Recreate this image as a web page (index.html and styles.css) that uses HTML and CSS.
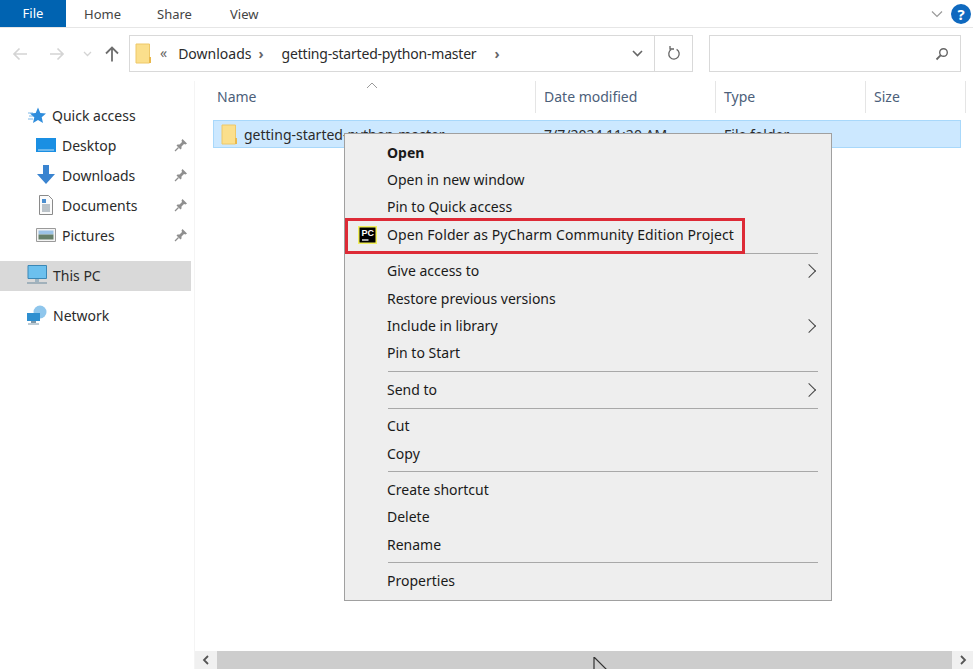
FILE: index.html
```html
<!DOCTYPE html>
<html lang="en">

<head>
  <meta charset="UTF-8" />
  <title>getting-started-python-master</title>
  <link rel="stylesheet" href="styles.css">
</head>

<body>

  <div class="ribbon">
    <span class="tab tab-file">File</span>
    <span class="tab">Home</span>
    <span class="tab">Share</span>
    <span class="tab">View</span>
    <svg class="ribbon-chevron" width="12" height="8" viewBox="0 0 12 8"><path d="M1 1.500 6 6.500 11 1.500" fill="none" stroke="#9a9a9a" stroke-width="1.200"/></svg>
    <span class="help">?</span>
  </div>

  <div class="addressbar">
    <div class="nav">
      <svg class="nav-back" width="16" height="14" viewBox="0 0 16 14"><path d="M15 7H2M7.500 1.500 2 7l5.500 5.500" fill="none" stroke="#d4d4d4" stroke-width="1.700"/></svg>
      <svg class="nav-forward" width="16" height="14" viewBox="0 0 16 14"><path d="M1 7h13M8.500 1.500 14 7l-5.500 5.500" fill="none" stroke="#d4d4d4" stroke-width="1.700"/></svg>
      <svg class="nav-recent" width="9" height="6" viewBox="0 0 9 6"><path d="M1 1 4.500 4.500 8 1" fill="none" stroke="#d4d4d4" stroke-width="1.300"/></svg>
      <svg class="nav-up" width="14" height="16" viewBox="0 0 14 16"><path d="M7 15.500V2M1 7.500 7 1.500l6 6" fill="none" stroke="#6e6e6e" stroke-width="1.800"/></svg>
    </div>
    <div class="address">
      <svg class="folder" width="16" height="21" viewBox="0 0 16 21"><path d="M1 1h13.500v19H1z" fill="#fbdf8c" stroke="#eec869"/><path d="M14 14h2v6h-2z" fill="#e9b84c"/></svg>
      <span class="crumb-more">«</span>
      <span>Downloads</span>
      <span class="crumb-sep">›</span>
      <span class="crumb-last">getting-started-python-master</span>
      <span class="crumb-sep">›</span>
      <svg class="address-drop" width="11" height="7" viewBox="0 0 11 7"><path d="M1 1 5.500 5.500 10 1" fill="none" stroke="#666" stroke-width="1.600"/></svg>
      <div class="refresh">
        <svg width="14" height="15" viewBox="0 0 14 15"><path d="M9.600 3.400A5.200 5.200 0 1 1 4.200 3.500" fill="none" stroke="#666" stroke-width="1.300"/><path d="M5 1v4H1" fill="none" stroke="#666" stroke-width="1.300" transform="rotate(90 5 3)"/></svg>
      </div>
    </div>
    <div class="search">
      <svg width="14" height="14" viewBox="0 0 14 14"><circle cx="8.500" cy="5.500" r="3.800" fill="none" stroke="#666" stroke-width="1.400"/><path d="M5.800 8.200 1.500 12.500" stroke="#666" stroke-width="1.800"/></svg>
    </div>
  </div>

  <div class="main">
    <nav class="sidebar">
      <div class="nav-item nav-quick">
        <svg width="24" height="18" viewBox="0 0 24 18"><path d="M4 7h5M5 10h5M4 13h5" stroke="#7cb8e8"/><path d="M14 1.500 16.300 7 22 7.500 17.700 11.300 19 17 14 14 9 17 10.300 11.300 6 7.500 11.700 7z" fill="#2f8ddc"/></svg>
        Quick access
      </div>
      <div class="nav-item nav-child">
        <svg width="20" height="16" viewBox="0 0 20 16"><path d="M0 1h20v14H0z" fill="#1a8fe3"/><path d="M2 13h16" stroke="#bfe0f7"/></svg>
        Desktop
        <svg class="pin" width="14" height="14" viewBox="0 0 14 14"><path d="M8.500 1 13 5.500 11.500 6.500 10 6 7.500 8.500 7.500 10.500 6.500 11.500 2.500 7.500 3.500 6.500 5.500 6.500 8 4 7.500 2.500z" fill="#8f8f8f"/><path d="M4.500 9.500 1 13" stroke="#8f8f8f" stroke-width="1.200"/></svg>
      </div>
      <div class="nav-item nav-child">
        <svg width="20" height="20" viewBox="0 0 20 20"><path d="M7 0h6v9h6l-9 10L1 9h6z" fill="#3a84d0"/></svg>
        Downloads
        <svg class="pin" width="14" height="14" viewBox="0 0 14 14"><path d="M8.500 1 13 5.500 11.500 6.500 10 6 7.500 8.500 7.500 10.500 6.500 11.500 2.500 7.500 3.500 6.500 5.500 6.500 8 4 7.500 2.500z" fill="#8f8f8f"/><path d="M4.500 9.500 1 13" stroke="#8f8f8f" stroke-width="1.200"/></svg>
      </div>
      <div class="nav-item nav-child">
        <svg width="20" height="20" viewBox="0 0 20 20"><path d="M3.500.5h9l4 4v15h-13z" fill="#fbfbfb" stroke="#8a8a8a"/><path d="M6 4h4v4H6z" fill="#4c8fd0"/><path d="M6 10h8M6 12h8M6 14h8M6 16h8" stroke="#7b8a96"/></svg>
        Documents
        <svg class="pin" width="14" height="14" viewBox="0 0 14 14"><path d="M8.500 1 13 5.500 11.500 6.500 10 6 7.500 8.500 7.500 10.500 6.500 11.500 2.500 7.500 3.500 6.500 5.500 6.500 8 4 7.500 2.500z" fill="#8f8f8f"/><path d="M4.500 9.500 1 13" stroke="#8f8f8f" stroke-width="1.200"/></svg>
      </div>
      <div class="nav-item nav-child">
        <svg width="20" height="14" viewBox="0 0 20 14"><path d="M.5.500h19v13H.5z" fill="#f4f4f4" stroke="#9a9a9a"/><path d="M2.500 2.500h15v4h-15z" fill="#9cc3e6"/><path d="M2.500 6.500h15v5h-15z" fill="#66806a"/></svg>
        Pictures
        <svg class="pin" width="14" height="14" viewBox="0 0 14 14"><path d="M8.500 1 13 5.500 11.500 6.500 10 6 7.500 8.500 7.500 10.500 6.500 11.500 2.500 7.500 3.500 6.500 5.500 6.500 8 4 7.500 2.500z" fill="#8f8f8f"/><path d="M4.500 9.500 1 13" stroke="#8f8f8f" stroke-width="1.200"/></svg>
      </div>
      <div class="nav-item nav-head nav-active">
        <svg width="22" height="20" viewBox="0 0 22 20"><path d="M2 .500h18.500v13H2z" fill="#6cc0ee" stroke="#3b87b5"/><path d="M9 14h4v3H9z" fill="#9fb4c1"/><path d="M1 18h20" stroke="#8ea3b0" stroke-width="1.500"/></svg>
        This PC
      </div>
      <div class="nav-item nav-head nav-network">
        <svg width="22" height="20" viewBox="0 0 22 20"><circle cx="14" cy="7" r="6.500" fill="#8fc6ec"/><path d="M1 8h13v8H1z" fill="#2e8fd0"/><path d="M5 16h5v2H5z" fill="#7c98aa"/><path d="M2 19h11" stroke="#7c98aa"/></svg>
        Network
      </div>
    </nav>

    <section class="files">
      <div class="columns">
        <div class="col col-name">Name
          <svg class="sort" width="12" height="7" viewBox="0 0 12 7"><path d="M1 6 6 1l5 5" fill="none" stroke="#9a9a9a"/></svg>
        </div>
        <div class="col col-date">Date modified</div>
        <div class="col col-type">Type</div>
        <div class="col col-size">Size</div>
      </div>
      <div class="row">
        <div class="cell cell-name">
          <svg class="folder" width="16" height="21" viewBox="0 0 16 21"><path d="M1 1h13.500v19H1z" fill="#fbdf8c" stroke="#eec869"/><path d="M14 14h2v6h-2z" fill="#e9b84c"/></svg>
          getting-started-python-master
        </div>
        <div class="cell cell-date">7/7/2024 11:20 AM</div>
        <div class="cell">File folder</div>
      </div>
      <div class="files-space"></div>
      <div class="hscroll">
        <svg width="8" height="10" viewBox="0 0 8 10"><path d="M6 1 2 5l4 4" fill="none" stroke="#555" stroke-width="1.800"/></svg>
        <div class="hscroll-thumb"></div>
        <svg width="8" height="10" viewBox="0 0 8 10"><path d="M2 1l4 4-4 4" fill="none" stroke="#555" stroke-width="1.800"/></svg>
      </div>
    </section>
  </div>

  <div class="menu">
    <div class="menu-item menu-bold">Open</div>
    <div class="menu-item">Open in new window</div>
    <div class="menu-item">Pin to Quick access</div>
    <div class="menu-item menu-marked">
      <svg class="pc-logo" width="19" height="18" viewBox="0 0 19 18">
        <path d="M0 0h19v18H0z" fill="#f2ef5c"/><path d="M1.500 1.500h16v15h-16z" fill="#000"/>
        <text x="3.500" y="10" class="pc-text">PC</text>
        <path d="M4 14h6.500" stroke="#fff" stroke-width="1.300"/>
      </svg>
      Open Folder as PyCharm Community Edition Project
    </div>
    <div class="menu-sep"></div>
    <div class="menu-item menu-sub">Give access to</div>
    <div class="menu-item">Restore previous versions</div>
    <div class="menu-item menu-sub">Include in library</div>
    <div class="menu-item">Pin to Start</div>
    <div class="menu-sep"></div>
    <div class="menu-item menu-sub">Send to</div>
    <div class="menu-sep"></div>
    <div class="menu-item">Cut</div>
    <div class="menu-item">Copy</div>
    <div class="menu-sep"></div>
    <div class="menu-item">Create shortcut</div>
    <div class="menu-item">Delete</div>
    <div class="menu-item">Rename</div>
    <div class="menu-sep"></div>
    <div class="menu-item">Properties</div>
  </div>

  <svg class="cursor" width="16" height="17" viewBox="0 0 16 17"><path d="M1 0v17M1 0l13 13" fill="#fff" stroke="#333" stroke-width="1.200"/></svg>

</body>

</html>
```

FILE: styles.css
```css
* {
  box-sizing: border-box;
}
html, body {
  height: 100%;
}
body {
  margin: 0;
  display: flex;
  flex-direction: column;
  overflow: hidden;
  position: relative;
  background: #fff;
  color: #1e1e1e;
  font-family: "Noto Sans", sans-serif;
  font-size: 14px;
}

/* ribbon */
.ribbon {
  height: 28px;
  flex: none;
  display: flex;
  align-items: center;
  border-bottom: 1px solid #e6e6e6;
  padding-right: 2px;
}
.tab {
  width: 73px;
  padding-left: 18px;
  font-size: 13px;
  color: #444;
}
.tab-file {
  width: 66px;
  height: 27px;
  padding: 4px 0 0;
  text-align: center;
  background: #0063b1;
  color: #fff;
}
.ribbon-chevron {
  margin-left: auto;
  margin-right: 8px;
}
.help {
  width: 20px;
  height: 20px;
  border-radius: 50%;
  background: #0f69bf;
  color: #fff;
  font-weight: 700;
  font-size: 15px;
  line-height: 20px;
  text-align: center;
}

/* address row */
.addressbar {
  height: 53px;
  flex: none;
  display: flex;
  align-items: flex-start;
  padding-top: 7px;
}
.nav {
  width: 129px;
  height: 37px;
  display: flex;
  align-items: center;
  padding-left: 12px;
}
.nav-forward {
  margin-left: 21px;
}
.nav-recent {
  margin-left: 18px;
}
.nav-up {
  margin-left: 13px;
}
.address {
  width: 564px;
  height: 37px;
  display: flex;
  align-items: center;
  border: 1px solid #d9d9d9;
  padding-left: 5px;
  gap: 7px;
  color: #2b2b2b;
}
.crumb-more {
  color: #666;
  margin: -3px 4px 0 2px;
}
.crumb-sep {
  color: #666;
  font-weight: 700;
  margin-right: 11px;
}
.crumb-last {
  margin-right: 11px;
  letter-spacing: -0.2px;
}
.address-drop {
  margin-left: auto;
  margin-right: 11px;
}
.refresh {
  width: 38px;
  height: 100%;
  display: flex;
  align-items: center;
  justify-content: center;
  border-left: 1px solid #d9d9d9;
  margin-left: -7px;
}
.search {
  width: 252px;
  height: 37px;
  margin-left: 16px;
  display: flex;
  align-items: center;
  justify-content: flex-end;
  border: 1px solid #d9d9d9;
  padding-right: 11px;
}

/* main area */
.main {
  flex: 1;
  display: flex;
  min-height: 0;
}
.sidebar {
  width: 195px;
  flex: none;
  border-right: 1px solid #f4f4f4;
  padding-top: 20px;
}
.nav-item {
  width: 191px;
  height: 30px;
  display: flex;
  align-items: center;
  padding-bottom: 2px;
  color: #2b2b2b;
}
.nav-quick {
  padding-left: 24px;
}
.nav-quick svg {
  margin-right: 4px;
}
.nav-head {
  padding-left: 26px;
}
.nav-head svg {
  margin-right: 5px;
}
.nav-child {
  padding-left: 36px;
}
.nav-child > svg:first-child {
  margin-right: 6px;
  flex: none;
}
.pin {
  margin-left: auto;
  margin-right: 3px;
}
.nav-active {
  background: #d9d9d9;
  margin-top: 10px;
}
.nav-network {
  margin-top: 10px;
}
.files {
  flex: 1;
  min-width: 0;
  display: flex;
  flex-direction: column;
}
.columns {
  height: 39px;
  flex: none;
  display: flex;
  margin-left: 14px;
  color: #4c607a;
}
.col {
  display: flex;
  align-items: center;
  height: 32px;
  padding: 0 0 2px 8px;
  border-right: 1px solid #e5e5e5;
  position: relative;
}
.col-name {
  width: 327px;
}
.col-date {
  width: 180px;
}
.col-type {
  width: 150px;
}
.col-size {
  width: 100px;
}
.sort {
  position: absolute;
  left: 157px;
  top: 1px;
}
.row {
  width: 748px;
  height: 28px;
  flex: none;
  display: flex;
  align-items: center;
  margin-left: 18px;
  background: #cce8ff;
  border: 1px solid #a8d8fb;
  color: #2b2b2b;
}
.cell-name {
  width: 330px;
  display: flex;
  align-items: center;
  gap: 7px;
  padding-left: 7px;
}
.cell-date {
  width: 180px;
}
.files-space {
  flex: 1;
}
.hscroll {
  height: 18px;
  flex: none;
  display: flex;
  align-items: center;
  background: #f0f0f0;
  margin-right: -1px;
}
.hscroll svg {
  width: 22px;
  flex: none;
}
.hscroll-thumb {
  flex: 1;
  height: 100%;
  background: #cdcdcd;
}

/* context menu */
.menu {
  position: absolute;
  left: 344px;
  top: 133px;
  width: 488px;
  height: 468px;
  padding: 5px 2px 0;
  background: #eeeeee;
  border: 1px solid #a0a0a0;
  color: #1a1a1a;
}
.menu-item {
  height: 27.4px;
  display: flex;
  align-items: center;
  padding: 0 0 1px 40px;
  position: relative;
}
.menu-bold {
  font-weight: 700;
}
.menu-sep {
  height: 1px;
  margin: 4px 11px 4px 41px;
  background: #a8a8a8;
}
.menu-sub::after {
  content: "";
  position: absolute;
  right: 15px;
  top: 8.500px;
  width: 9px;
  height: 9px;
  border-top: 1px solid #444;
  border-right: 1px solid #444;
  transform: rotate(45deg);
}
.menu-marked {
  letter-spacing: 0.1px;
}
.menu-marked::before {
  content: "";
  box-sizing: border-box;
  position: absolute;
  left: -2px;
  top: -3px;
  width: 400px;
  height: 36px;
  border: 3px solid #dd2a36;
}
.pc-logo {
  position: absolute;
  left: 11px;
  top: 5px;
}
.pc-text {
  font-family: "Liberation Sans", sans-serif;
  font-size: 9px;
  font-weight: 700;
  letter-spacing: 0;
  fill: #fff;
}
.cursor {
  position: absolute;
  left: 593px;
  top: 657px;
}
```
